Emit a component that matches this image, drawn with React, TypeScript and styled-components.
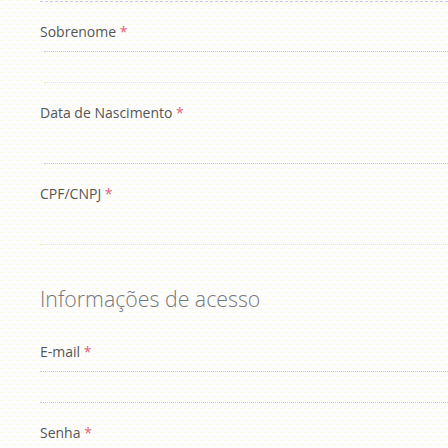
import React from "react";
import styled, { createGlobalStyle } from "styled-components";

const Global = createGlobalStyle`
  html, body {
    margin: 0;
    padding: 0;
    background-color: #fdfdff;
    background-image:
      radial-gradient(circle at 1.5px 0.5px, #ffff8a 0.7px, transparent 1.1px),
      radial-gradient(circle at 5.5px 4.5px, #ffff8a 0.7px, transparent 1.1px);
    background-size: 8px 8px, 8px 8px;
  }
  body {
    font-family: "Open Sans", "Liberation Sans", sans-serif;
    width: 448px;
    height: 448px;
    overflow: hidden;
  }
`;

const Form = styled.form`
  display: flex;
  flex-direction: column;
  padding-left: 40px;
`;

const Tail = styled.div`
  height: 1px;
  border-bottom: 1px dashed #c9c9ee;
  margin-bottom: 20px;
`;

const Field = styled.div`
  display: flex;
  flex-direction: column;
  margin-bottom: 20px;
`;

const Label = styled.label`
  display: block;
  height: 20px;
  font-size: 14px;
  line-height: 20px;
  color: #555;
`;

const Star = styled.span`
  color: #e0607a;
`;

const Control = styled.div<{ $line: "lavender" | "yellow"; $inset: number }>`
  height: 40px;
  margin-left: ${(p) => p.$inset}px;
  border-bottom: 1px dotted
    ${(p) => (p.$line === "lavender" ? "#c6c6ec" : "#ecec9c")};
`;

const Input = styled.input<{ $top: boolean }>`
  display: block;
  box-sizing: border-box;
  width: 100%;
  height: 30px;
  margin: 9px 0 0 0;
  padding: 0;
  background: transparent;
  border: none;
  border-top: ${(p) => (p.$top ? "1px dotted #c6c6ec" : "none")};
  outline: none;
  font: inherit;
`;

const Heading = styled.h3`
  margin: 19px 0 28px 0;
  font-size: 21.3px;
  line-height: 30px;
  font-weight: 300;
  color: #777;
`;

type F = { label: string; line: "lavender" | "yellow"; inset: number; top: boolean };

const personal: F[] = [
  { label: "Sobrenome", line: "yellow", inset: 4, top: true },
  { label: "Data de Nascimento", line: "lavender", inset: 4, top: false },
  { label: "CPF/CNPJ", line: "yellow", inset: 0, top: false },
];

const access: F[] = [
  { label: "E-mail", line: "lavender", inset: 0, top: true },
  { label: "Senha", line: "yellow", inset: 0, top: true },
];

const FieldRow = ({ f }: { f: F }) => (
  <Field>
    <Label>
      {f.label} <Star>*</Star>
    </Label>
    <Control $line={f.line} $inset={f.inset}>
      <Input $top={f.top} />
    </Control>
  </Field>
);

export default function App() {
  return (
    <>
      <Global />
      <Form>
        <Tail />
        {personal.map((f) => (
          <FieldRow key={f.label} f={f} />
        ))}
        <Heading>Informações de acesso</Heading>
        {access.map((f) => (
          <FieldRow key={f.label} f={f} />
        ))}
      </Form>
    </>
  );
}
